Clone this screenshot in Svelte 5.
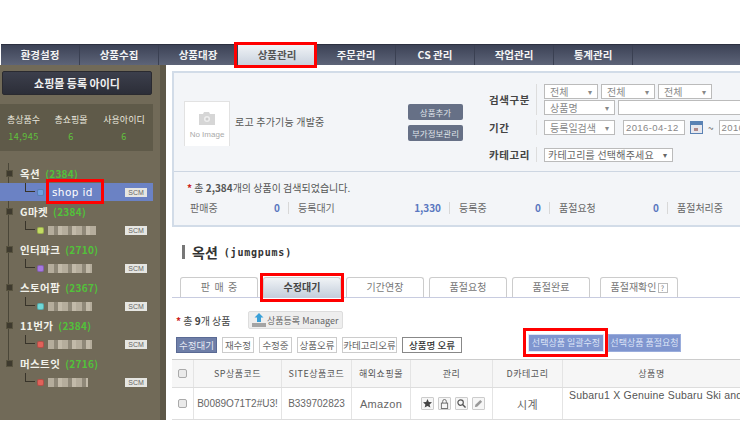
<script>
	const navItems = ['환경설정', '상품수집', '상품대장', '상품관리', '주문관리', 'CS 관리', '작업관리', '통계관리'];
	const stats = [
		{ label: '총상품수', value: '14,945' },
		{ label: '총쇼핑몰', value: '6' },
		{ label: '사용아이디', value: '6' }
	];
	const shops = [
		{ name: '옥션', count: 2384, color: '#6f9fe0', id: 'shop id', active: true },
		{ name: 'G마켓', count: 2384, color: '#c3dc62', w: 48 },
		{ name: '인터파크', count: 2710, color: '#a678e0', w: 44 },
		{ name: '스토어팜', count: 2367, color: '#6fd8d8', w: 44 },
		{ name: '11번가', count: 2384, color: '#e0625a', w: 44 },
		{ name: '머스트잇', count: 2716, color: '#e0625a', w: 40 }
	];
	const statusCounts = [
		{ label: '판매중', value: '0', w: 99 },
		{ label: '등록대기', value: '1,330', w: 152 },
		{ label: '등록중', value: '0', w: 91 },
		{ label: '품절요청', value: '0', w: 109 },
		{ label: '품절처리중', value: '', w: 70 }
	];
	const tabs = ['판\u00a0\u00a0매\u00a0\u00a0중', '수정대기', '기간연장', '품절요청', '품절완료', '품절재확인'];
	const filters = [
		{ label: '수정대기', w: 41 },
		{ label: '재수정', w: 32 },
		{ label: '수정중', w: 33 },
		{ label: '상품오류', w: 40 },
		{ label: '카테고리오류', w: 55 }
	];
</script>

<div class="page">
	<nav class="nav">
		{#each navItems as item, i}
			<div class="nav-item" class:current={i === 3}>{item}</div>
		{/each}
	</nav>

	<div class="body">
		<aside class="side">
			<div class="side-title">쇼핑몰 등록 아이디</div>
			<div class="stats">
				{#each stats as s}
					<div class="stat">
						<span>{s.label}</span>
						<b>{s.value}</b>
					</div>
				{/each}
			</div>
			<div class="tree">
				{#each shops as shop}
					<div class="shop">
						<div class="shop-name">
							<span class="minus"></span>
							<span class="mall-name">{shop.name}</span>
							<span class="count">({shop.count})</span>
						</div>
						<div class="shop-row" class:active={shop.active}>
							<span class="elbow"></span>
							<span class="dot" style="background: {shop.color}"></span>
							{#if shop.id}
								<span class="shop-id">{shop.id}</span>
							{:else}
								<span class="blur" style="width: {shop.w}px"></span>
							{/if}
							<span class="scm">SCM</span>
						</div>
					</div>
				{/each}
			</div>
		</aside>

		<main class="main">
			<section class="panel">
				<div class="panel-top">
					<div class="noimg">
						<svg width="16" height="13" viewBox="0 0 16 13">
							<path d="M0 2h4l1-2h5l1 2h5v11H0z" fill="#d6d6d6" />
							<circle cx="8" cy="7" r="3" fill="#eee" />
							<circle cx="8" cy="7" r="1.500" fill="#ccc" />
						</svg>
						<span>No Image</span>
					</div>
					<span class="logo-note">로고 추가기능 개발중</span>
					<div class="panel-btns">
						<span class="slate">상품추가</span>
						<span class="slate">부가정보관리</span>
					</div>
					<div class="search">
						<div class="search-row">
							<b class="tall">검색구분</b>
							<div class="fields">
								<div class="line">
									<span class="sel w54">전체</span>
									<span class="sel w54">전체</span>
									<span class="sel w54">전체</span>
								</div>
								<div class="line">
									<span class="sel w71">상품명</span>
									<span class="input"></span>
								</div>
							</div>
						</div>
						<div class="search-row">
							<b>기간</b>
							<div class="fields">
								<div class="line">
									<span class="sel w71">등록일검색</span>
									<span class="date first">2016-04-12</span>
									<svg class="cal" width="13" height="13" viewBox="0 0 13 13">
										<rect width="13" height="13" fill="#5a82b4" />
										<rect x="1" y="4" width="11" height="8" fill="#e8e8ee" />
										<rect x="4" y="7" width="4" height="3" fill="#b08a8a" />
									</svg>
									<span class="tilde">~</span>
									<span class="date">2016-04-12</span>
								</div>
							</div>
						</div>
						<div class="search-row third">
							<b>카테고리</b>
							<div class="fields">
								<span class="sel cat">카테고리를 선택해주세요</span>
							</div>
						</div>
					</div>
				</div>
				<div class="panel-bottom">
					<p class="total"><i>*</i> 총 <b>2,384</b>개의 상품이 검색되었습니다.</p>
					<div class="status">
						{#each statusCounts as c}
							<div class="status-cell" style="width: {c.w}px">
								<span>{c.label}</span>
								<em>{c.value}</em>
							</div>
						{/each}
					</div>
				</div>
			</section>

			<h2 class="heading"><span class="bar"></span>옥션 <small>(jumgpums)</small></h2>

			<div class="tabs">
				{#each tabs as tab, i}
					<div class="tab" class:on={i === 1} class:last={i === 5}>
						{tab}{#if i === 5}<span class="q">?</span>{/if}
					</div>
				{/each}
			</div>

			<div class="count-line">
				<span class="count-text"><i>*</i> 총 <b>9</b>개 상품</span>
				<span class="manager">
					<svg width="14" height="14" viewBox="0 0 14 14">
						<path d="M7 0l4.500 4.500H9V9H5V4.500H2.500z" fill="#3aa0d8" />
						<path d="M0 10h14v4H0z" fill="#a4a4a4" />
					</svg>
					상품등록 Manager
				</span>
			</div>

			<div class="filter-line">
				{#each filters as f, i}
					<span class="filter" class:on={i === 0} style="width: {f.w}px">{f.label}</span>
				{/each}
				<span class="filter strong">상품명 오류</span>
				<span class="bulk first">선택상품 일괄수정</span>
				<span class="bulk second">선택상품 품절요청</span>
			</div>

			<div class="table">
				<div class="row head">
					<div class="c check"><span class="box"></span></div>
					<div class="c sp">SP상품코드</div>
					<div class="c site">SITE상품코드</div>
					<div class="c mall">해외쇼핑몰</div>
					<div class="c manage">관리</div>
					<div class="c cate">D카테고리</div>
					<div class="c title">상품명</div>
				</div>
				<div class="row data">
					<div class="c check"><span class="box"></span></div>
					<div class="c sp">B0089O71T2#U3!</div>
					<div class="c site">B339702823</div>
					<div class="c mall big">Amazon</div>
					<div class="c manage icons">
						<span class="ico"><svg width="9" height="9" viewBox="0 0 10 10"><path d="M5 0l1.500 3.400 3.500.3-2.700 2.300.9 3.500L5 7.700 1.800 9.500l.9-3.500L0 3.700l3.500-.3z" fill="#444" /></svg></span>
						<span class="ico"><svg width="9" height="10" viewBox="0 0 10 11"><rect x="1.500" y="4.500" width="7" height="6" fill="none" stroke="#666" /><path d="M3 4.500V2.500a2 2 0 0 1 4 0v2" fill="none" stroke="#666" /></svg></span>
						<span class="ico"><svg width="9" height="9" viewBox="0 0 10 10"><circle cx="4" cy="4" r="3" fill="none" stroke="#555" stroke-width="1.300" /><path d="M6.500 6.500L9.500 9.500" stroke="#555" stroke-width="1.600" /></svg></span>
						<span class="ico"><svg width="9" height="9" viewBox="0 0 10 10"><path d="M1 9l.5-2.500L7 1l2 2-5.500 5.500z" fill="#999" /></svg></span>
					</div>
					<div class="c cate big">시계</div>
					<div class="c title pname">Subaru1 X Genuine Subaru Ski and Snowboard</div>
				</div>
			</div>
		</main>
	</div>

	<div class="mark m-nav"></div>
	<div class="mark m-shop"></div>
	<div class="mark m-tab"></div>
	<div class="mark m-bulk"></div>
</div>

<style>
	:global(body) {
		margin: 0;
		background: #fff;
		font-family: "Noto Sans CJK KR", "Liberation Sans", sans-serif;
	}

	.page {
		position: relative;
		width: 740px;
		height: 425px;
		padding-top: 44px;
		box-sizing: border-box;
		overflow: hidden;
		color: #666;
		font-size: 10px;
	}

	.nav {
		display: flex;
		height: 21px;
		margin-left: 1px;
		background: linear-gradient(#3c4256, #5d6478);
		border-top: 1px solid #2c3040;
		box-sizing: border-box;
	}

	.nav-item {
		width: 79px;
		border-right: 1px solid #3a4052;
		box-sizing: border-box;
		color: #f4f4f4;
		font-size: 10.5px;
		font-weight: 700;
		line-height: 20px;
		text-align: center;
	}

	.nav-item.current {
		background: linear-gradient(#f0f3f6, #c9d2de);
		color: #555;
	}

	.body {
		display: flex;
		height: 360px;
	}

	.side {
		flex-shrink: 0;
		box-sizing: border-box;
		width: 166px;
		height: 355px;
		padding: 6px 0 0 2px;
		background: #716a58;
		border-right: 6px solid #5e5848;
	}

	.side-title {
		width: 150px;
		height: 24px;
		background: linear-gradient(#3c3f4c, #2c2e38);
		border: 1px solid #2a2a30;
		border-radius: 2px;
		box-sizing: border-box;
		color: #f0f0f0;
		font-size: 11px;
		font-weight: 700;
		line-height: 22px;
		text-align: center;
	}

	.stats {
		display: grid;
		grid-template-columns: 47px 48px 58px;
		width: 153px;
		height: 47px;
		margin: 9px 0 0 -2px;
		box-sizing: border-box;
		padding-top: 10px;
		background: #5f5a49;
	}

	.stat {
		display: flex;
		flex-direction: column;
		align-items: center;
		gap: 5px;
		color: #e8e6dc;
		font-size: 9px;
		line-height: 12px;
		white-space: nowrap;
	}

	.stat b {
		color: #5fc23c;
		font-weight: 400;
		letter-spacing: 0.5px;
	}

	.tree {
		width: 153px;
		margin: 12px 0 0 -2px;
	}

	.shop {
		height: 38px;
		background: linear-gradient(#4a4638, #4a4638) 8px 0 / 1px 100% no-repeat;
	}

	.shop:last-child {
		background-size: 1px 10px;
	}

	.shop-name {
		display: flex;
		align-items: center;
		gap: 5px;
		height: 20px;
		padding-left: 6px;
	}

	.minus {
		width: 5px;
		height: 5px;
		margin-right: 2px;
		background: #3e3a2e;
		border: 1px solid #57523f;
	}

	.mall-name {
		color: #f2f2ea;
		font-size: 10.5px;
		font-weight: 700;
		letter-spacing: 0.4px;
	}

	.count {
		color: #52c23a;
		font-size: 10px;
		font-weight: 700;
		letter-spacing: 0.3px;
	}

	.shop-row {
		display: flex;
		align-items: center;
		height: 18px;
		padding-left: 25px;
	}

	.shop-row.active {
		background: #6b82c4;
	}

	.elbow {
		align-self: flex-start;
		box-sizing: border-box;
		width: 10px;
		height: 9px;
		margin-right: 2px;
		border-left: 1px solid #38342a;
		border-bottom: 1px solid #38342a;
	}

	.dot {
		box-sizing: border-box;
		width: 7px;
		height: 7px;
		margin-right: 4px;
		border: 1px solid rgba(0, 0, 0, 0.2);
		border-radius: 2px;
	}

	.shop-id {
		margin-left: 4px;
		color: #fff;
		font-family: "DejaVu Sans", sans-serif;
		font-size: 10.5px;
		letter-spacing: 0.4px;
	}

	.blur {
		height: 9px;
		background: repeating-linear-gradient(90deg, #b5ad9c 0 6px, #8f8878 6px 10px, #c2baa9 10px 14px);
		filter: blur(0.6px);
	}

	.scm {
		width: 22px;
		height: 9px;
		margin-left: auto;
		margin-right: 6px;
		background: #e6e6e2;
		color: #666;
		font-family: "Liberation Sans", sans-serif;
		font-size: 7px;
		line-height: 9px;
		text-align: center;
	}

	.main {
		flex: 1;
		min-width: 0;
		padding: 6px 0 0 6px;
	}

	.panel {
		width: 600px;
		height: 156px;
		box-sizing: border-box;
		background: #f3f5f8;
		border: 2px solid #d2dce8;
		border-right: 0;
	}

	.panel-top {
		display: flex;
		align-items: flex-start;
		height: 98px;
		border-bottom: 1px solid #cdd6e2;
	}

	.noimg {
		display: flex;
		flex-direction: column;
		align-items: center;
		gap: 5px;
		flex-shrink: 0;
		width: 46px;
		height: 45px;
		margin: 28px 0 0 10px;
		padding-top: 10px;
		box-sizing: border-box;
		background: #fff;
		border: 1px solid #e2e2e2;
		border-bottom: 0;
		color: #aaa;
		font-family: "Liberation Sans", sans-serif;
		font-size: 8px;
	}

	.logo-note {
		flex-shrink: 0;
		width: 173px;
		margin: 41px 0 0 5px;
		box-sizing: border-box;
		color: #555;
		font-size: 10px;
		letter-spacing: 0.2px;
	}

	.panel-btns {
		display: flex;
		flex-direction: column;
		gap: 5px;
		flex-shrink: 0;
		width: 55px;
		margin-top: 31px;
	}

	.slate {
		height: 16px;
		background: #667086;
		border-radius: 2px;
		color: #dfe2e8;
		font-size: 8.5px;
		line-height: 16px;
		text-align: center;
	}

	.search {
		flex-shrink: 0;
		margin: 11px 0 0 26px;
	}

	.search-row {
		display: flex;
		align-items: center;
		margin-bottom: 5px;
	}

	.search-row.third {
		margin-top: 12px;
	}

	.search-row b {
		display: flex;
		align-items: center;
		flex-shrink: 0;
		box-sizing: border-box;
		width: 48px;
		height: 15px;
		margin-right: 7px;
		border-right: 1px solid #ddd;
		color: #444;
		font-size: 10.5px;
		letter-spacing: 0.6px;
	}

	.search-row b.tall {
		height: 31px;
	}

	.fields {
		display: flex;
		flex-direction: column;
		gap: 1px;
	}

	.line {
		display: flex;
		align-items: center;
		gap: 3px;
	}

	.sel {
		position: relative;
		box-sizing: border-box;
		height: 15px;
		padding-left: 5px;
		background: #fff;
		border: 1px solid #bbb;
		color: #888;
		font-size: 10px;
		line-height: 13px;
	}

	.sel::after {
		content: '▾';
		position: absolute;
		right: 5px;
		top: 0;
		font-size: 8px;
	}

	.w54 { width: 54px; }
	.w71 { width: 71px; }

	.cat {
		width: 129px;
		height: 14px;
		padding-left: 3px;
		color: #666;
		line-height: 12px;
		letter-spacing: 0.2px;
	}

	.input {
		box-sizing: border-box;
		width: 140px;
		height: 15px;
		background: #fff;
		border: 1px solid #bbb;
	}

	.date {
		flex-shrink: 0;
		box-sizing: border-box;
		width: 62px;
		height: 15px;
		padding-left: 2px;
		background: #fff;
		border: 1px solid #bbb;
		color: #888;
		font-family: "Liberation Sans", sans-serif;
		font-size: 9.5px;
		line-height: 13px;
		letter-spacing: 0.4px;
	}

	.date.first {
		margin-left: 5px;
	}

	.cal {
		flex-shrink: 0;
		margin-left: 2px;
	}

	.tilde {
		margin: 0 2px;
		color: #666;
	}

	.panel-bottom {
		padding: 9px 0 0 13px;
	}

	.total {
		margin: 0 0 8px;
		color: #555;
		font-size: 10px;
		line-height: 13px;
	}

	.total i, .count-text i {
		color: #c22;
		font-style: normal;
		font-weight: 700;
	}

	.status {
		display: flex;
		margin-left: 3px;
	}

	.status-cell {
		display: flex;
		justify-content: space-between;
		flex-shrink: 0;
		box-sizing: border-box;
		margin-right: 9px;
		padding-right: 8px;
		border-right: 1px solid #d8d8d8;
		font-size: 10px;
		line-height: 12px;
		white-space: nowrap;
	}

	.status-cell:last-child {
		border-right: 0;
	}

	.status-cell em {
		color: #5a78c0;
		font-style: normal;
		font-weight: 700;
	}

	.heading {
		display: flex;
		align-items: center;
		gap: 7px;
		height: 20px;
		margin: 15px 0 0 10px;
		color: #333;
		font-size: 14px;
	}

	.heading small {
		margin-left: -1px;
		font-family: "DejaVu Sans Mono", monospace;
		font-size: 10px;
		letter-spacing: 0.8px;
	}

	.bar {
		width: 3px;
		height: 14px;
		background: #777;
	}

	.tabs {
		display: flex;
		gap: 5px;
		height: 20px;
		margin-top: 15px;
		padding-left: 8px;
		border-bottom: 1px solid #c8cce0;
	}

	.tab {
		box-sizing: border-box;
		width: 78px;
		height: 20px;
		border: 1px solid #ccc;
		border-bottom: 0;
		border-radius: 3px 3px 0 0;
		color: #777;
		font-size: 10px;
		line-height: 18px;
		text-align: center;
	}

	.tab.on {
		background: linear-gradient(#f0f3f6, #c5cfdc);
		color: #444;
		font-weight: 700;
	}

	.tab.last {
		margin-left: 5px;
	}

	.q {
		display: inline-block;
		width: 8px;
		height: 8px;
		margin-left: 1px;
		border: 1px solid #bbb;
		font-size: 7px;
		line-height: 8px;
	}

	.count-line {
		display: flex;
		align-items: center;
		margin: 13px 0 0 4px;
	}

	.count-text {
		width: 72px;
		color: #444;
		font-size: 10px;
		white-space: nowrap;
	}

	.manager {
		display: flex;
		align-items: center;
		gap: 1px;
		box-sizing: border-box;
		width: 95px;
		height: 18px;
		padding-left: 3px;
		background: #eee;
		border: 1px solid #ddd;
		border-radius: 2px;
		color: #666;
		font-size: 9px;
		white-space: nowrap;
	}

	.filter-line {
		display: flex;
		align-items: flex-start;
		gap: 5px;
		height: 19px;
		margin: 5px 0 0 4px;
	}

	.filter {
		flex-shrink: 0;
		box-sizing: border-box;
		height: 16px;
		margin-top: 3px;
		background: #fff;
		border: 1px solid #ccc;
		color: #666;
		font-size: 9.5px;
		line-height: 14px;
		text-align: center;
		white-space: nowrap;
	}

	.filter.on {
		background: #6f7fa8;
		border-color: #5a6a94;
		color: #e6e9f2;
	}

	.filter.strong {
		width: 60px;
		border-color: #888;
		color: #333;
		font-weight: 500;
	}

	.bulk {
		flex-shrink: 0;
		box-sizing: border-box;
		height: 18px;
		background: #7f95cf;
		border: 1px solid #9aaddc;
		color: #dde4f6;
		font-size: 9px;
		line-height: 16px;
		text-align: center;
		white-space: nowrap;
	}

	.bulk.first {
		width: 76px;
		margin-left: 61px;
		border-color: #dfe6f6;
	}

	.bulk.second {
		width: 73px;
		margin-left: -1px;
	}

	.table {
		margin-top: 6px;
		border-top: 1px solid #ccc;
	}

	.row {
		display: flex;
		border-bottom: 1px solid #ddd;
	}

	.row.head {
		height: 27px;
		background: #f6f6f6;
		color: #555;
		font-size: 9px;
		letter-spacing: 0.5px;
	}

	.row.data {
		height: 31px;
		color: #666;
		font-family: "Liberation Sans", "Noto Sans CJK KR", sans-serif;
		font-size: 10px;
	}

	.c {
		display: flex;
		align-items: center;
		justify-content: center;
		flex-shrink: 0;
		box-sizing: border-box;
		border-right: 1px solid #e4e4e4;
		white-space: nowrap;
	}

	.check { width: 22px; }
	.sp { width: 88px; }
	.site { width: 70px; }
	.mall { width: 59px; }
	.manage { width: 82px; }
	.cate { width: 70px; }
	.title { width: 177px; border-right: 0; }

	.big {
		font-size: 11px;
		letter-spacing: 0.3px;
	}

	.box {
		width: 7px;
		height: 7px;
		background: #eaeaea;
		border: 1px solid #aaa;
		border-radius: 2px;
	}

	.icons {
		gap: 4px;
		padding-left: 2px;
	}

	.ico {
		display: flex;
		align-items: center;
		justify-content: center;
		box-sizing: border-box;
		width: 13px;
		height: 13px;
		background: #f6f6f6;
		border: 1px solid #ccc;
		border-radius: 1px;
	}

	.pname {
		justify-content: flex-start;
		align-items: flex-start;
		padding: 1px 0 0 6px;
		color: #555;
		font-size: 10.5px;
		letter-spacing: 0.2px;
	}

	.mark {
		position: absolute;
		box-sizing: border-box;
		border: 3px solid #f00;
	}

	.m-nav { left: 234px; top: 42px; width: 83px; height: 26px; }
	.m-shop { left: 46px; top: 179px; width: 58px; height: 25px; }
	.m-tab { left: 260px; top: 273px; width: 84px; height: 29px; }
	.m-bulk { left: 523px; top: 328px; width: 85px; height: 29px; }
</style>
